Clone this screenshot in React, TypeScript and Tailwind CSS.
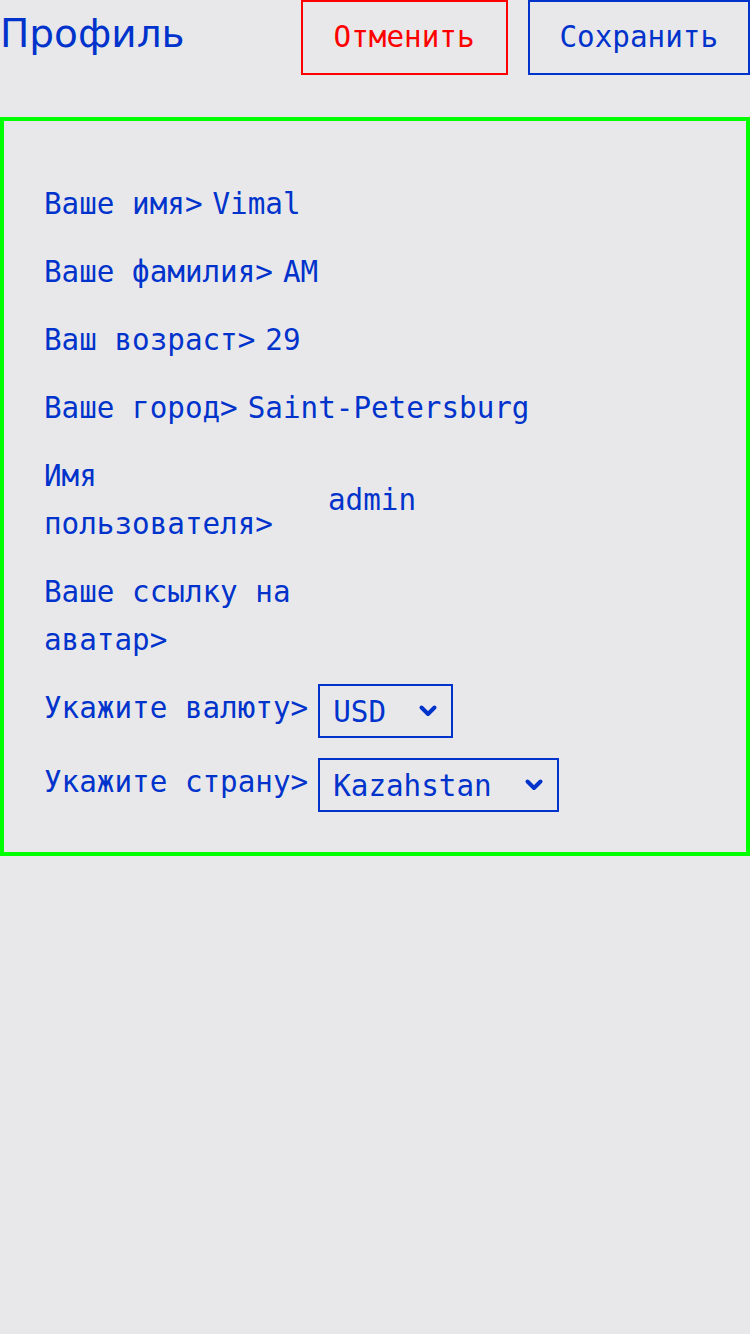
import React from 'react';

const MONO = "font-['DejaVu_Sans_Mono','Liberation_Mono',monospace]";

function Chevron() {
  return (
    <svg width="20" height="14" viewBox="0 0 20 14" fill="none">
      <path d="M3.5 3.5 L10 10 L16.5 3.5" stroke="#0033cc" strokeWidth="4" strokeLinecap="round" strokeLinejoin="round" />
    </svg>
  );
}

function Row({ label, value, center }: { label: string; value: string; center?: boolean }) {
  return (
    <div className={`flex ${center ? 'items-center' : 'items-start'}`}>
      <span className="max-w-[274px] leading-[48px]">{label}</span>
      <span className="ml-[10px] leading-[48px]">{value}</span>
    </div>
  );
}

function SelectRow({ label, value }: { label: string; value: string }) {
  return (
    <div className="flex items-start">
      <span className="max-w-[274px] leading-[48px]">{label}</span>
      <div className="ml-[10px] flex h-[54px] items-center gap-[32px] border-2 border-[#0033cc] pl-[13px] pr-[13px]">
        <span className="pt-[4px] leading-none">{value}</span>
        <Chevron />
      </div>
    </div>
  );
}

export default function App() {
  return (
    <div className={`min-h-screen bg-[#e8e8ea] text-[29.25px] text-[#0033cc] ${MONO}`}>
      {/* шапка */}
      <div className="flex items-baseline justify-between">
        <h1 className="font-['DejaVu_Sans','Noto_Sans',sans-serif] text-[39px] leading-none">Профиль</h1>
        <div className="flex items-baseline gap-[20px]">
          <button className="flex h-[75px] items-center border-2 border-[#ff0000] px-[31px] text-[#ff0000]">
            Отменить
          </button>
          <button className="flex h-[75px] items-center border-2 border-[#0033cc] px-[30px]">
            Сохранить
          </button>
        </div>
      </div>

      {/* форма */}
      <div className="mt-[42px] flex flex-col gap-[20px] border-4 border-[#00ff00] pb-[40px] pl-[40px] pr-[40px] pt-[59px]">
        <Row label="Ваше имя>" value="Vimal" />
        <Row label="Ваше фамилия>" value="AM" />
        <Row label="Ваш возраст>" value="29" />
        <Row label="Ваше город>" value="Saint-Petersburg" />
        <Row label="Имя пользователя>" value="admin" center />
        <Row label="Ваше ссылку на аватар>" value="" />
        <SelectRow label="Укажите валюту>" value="USD" />
        <SelectRow label="Укажите страну>" value="Kazahstan" />
      </div>
    </div>
  );
}
